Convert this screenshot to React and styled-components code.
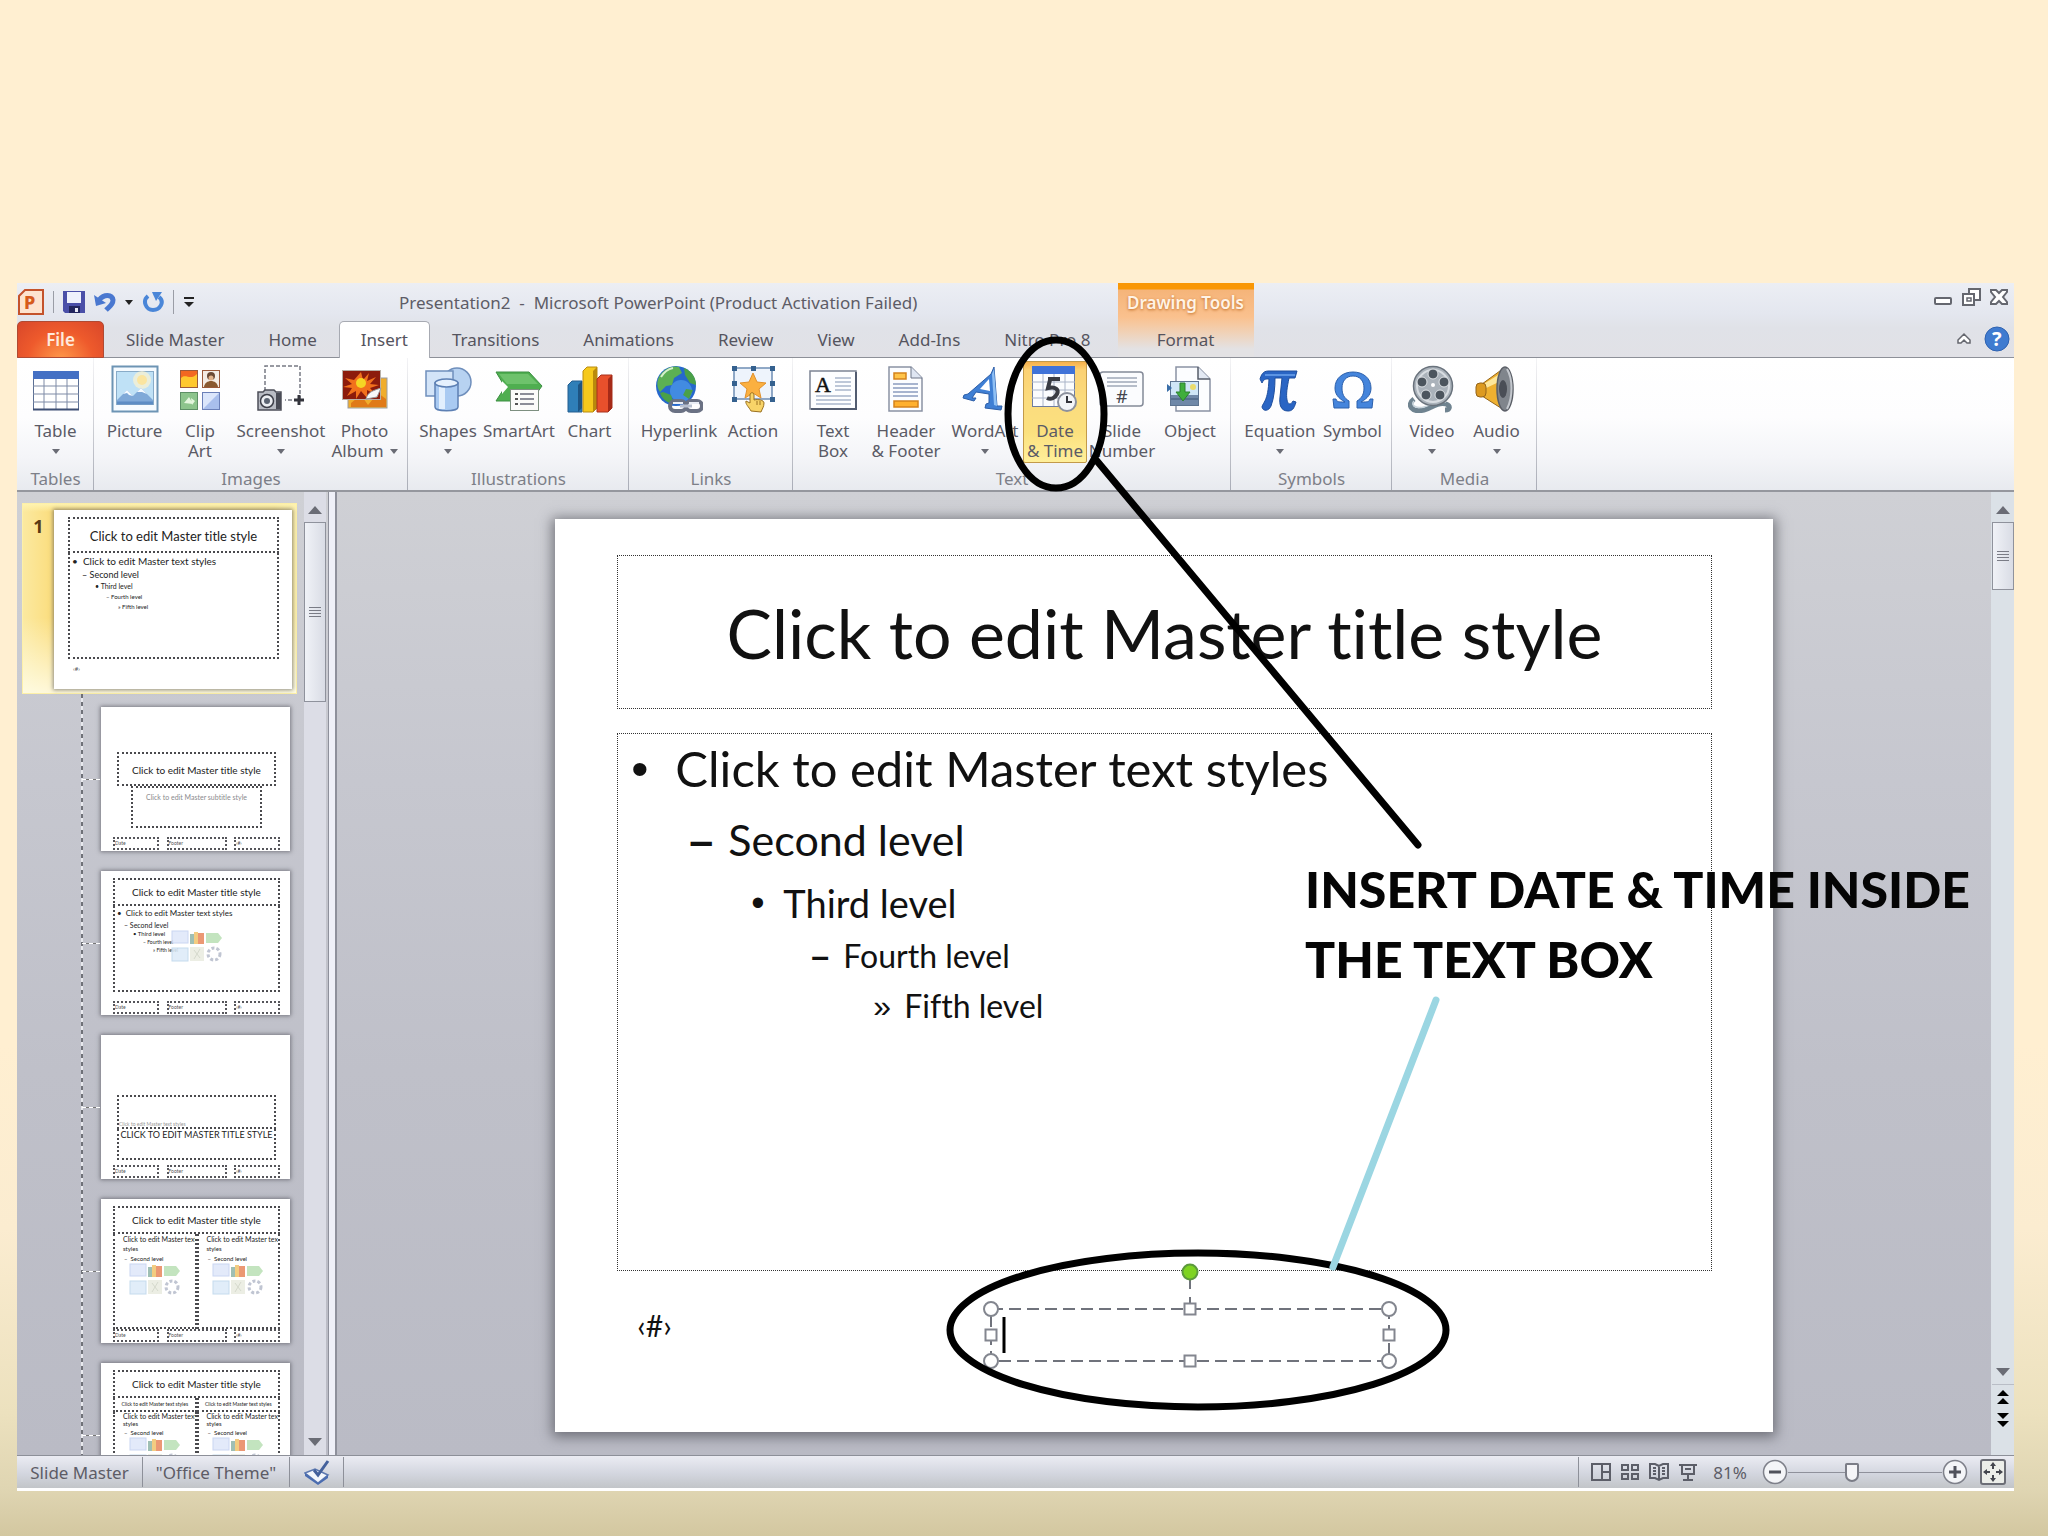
import React from "react";
import styled, { createGlobalStyle, css } from "styled-components";

const UI_FONT = '"Noto Sans", "Open Sans", sans-serif';
const SLIDE_FONT = 'Lato, "Noto Sans", sans-serif';

const GlobalStyle = createGlobalStyle`
  *, *::before, *::after { box-sizing: border-box; }
  body { margin: 0; font-family: ${UI_FONT}; color: #55575f; font-variant-ligatures: none; }
  button { font: inherit; color: inherit; background: none; border: 0; padding: 0; margin: 0; }
  h1, h2, p, ul { margin: 0; padding: 0; font-weight: 400; }
  svg { display: block; }
`;

const Page = styled.div`
  display: flex;
  height: 100vh;
  padding: 283px 34px 45px 17px;
  background: linear-gradient(#ffefd1 0%, #ffefd1 68%, #fbecd0 80%, #ece1be 92%, #dfd5b2 97%, #d3c7a0 100%);
`;

const Window = styled.main`
  position: relative;
  flex: 1;
  min-width: 0;
  display: flex;
  flex-direction: column;
`;

/* ---------- title bar and tabs ---------- */

const Header = styled.header`
  display: grid;
  grid-template-columns: auto 136px 1fr;
  grid-template-rows: 38px 37px;
  background: linear-gradient(#eceef4, #e4e7ef 40%, #e0e2e8 60%, #e1e1e6);
  font-size: 17px;
`;

const TitleRow = styled.div`
  display: flex;
  align-items: center;
  padding-left: 1px;
`;

const QuickAccess = styled.div`
  display: flex;
  align-items: center;
  gap: 9px;
  width: 381px;
`;

const Divider = styled.span`
  width: 1px;
  height: ${(p) => p.$h || 22}px;
  background: #9a9da6;
`;

const AppTitle = styled.h1`
  font-size: 17px;
  white-space: pre;
  color: #5d5c66;
`;

const Tabs = styled.nav`
  grid-row: 2;
  display: flex;
  padding-right: 5px;
  border-bottom: 1px solid #8d9098;
`;

const Tab = styled.button`
  height: 37px;
  padding: 0 21px;
  line-height: 34px;
  white-space: nowrap;
  color: #55545e;
  border: 1px solid transparent;
  border-bottom: 0;
  ${(p) =>
    p.$kind === "file" &&
    css`
      width: 87px;
      padding: 0;
      color: #ffe9dc;
      font-weight: 600;
      border: 1px solid #b04a33;
      border-radius: 5px 5px 0 0;
      background: radial-gradient(ellipse at 50% 110%, #ff9a4a, #ee5a2c 55%, #d8472a);
    `}
  ${(p) =>
    p.$kind === "active" &&
    css`
      background: #fff;
      border-color: #a7aab2;
      border-radius: 5px 5px 0 0;
    `}
`;

const ContextTab = styled.div`
  grid-column: 2;
  grid-row: 1 / 3;
  display: flex;
  flex-direction: column;
  border-bottom: 1px solid #8d9098;
  background: linear-gradient(#f99706 0, #f99706 6px, #f5b479 7px, #fac18e 34px, #f0d2b8 50px, #e3e2e4 66px);
`;

const ContextTitle = styled.span`
  height: 38px;
  line-height: 40px;
  text-align: center;
  font-weight: 600;
  font-size: 17px;
  white-space: nowrap;
  color: #fff3e6;
  text-shadow: 0 1px 3px #c06a20;
`;

const WindowControls = styled.div`
  grid-column: 3;
  display: flex;
  justify-content: flex-end;
  align-items: center;
  gap: 8px;
  padding: 0 5px 10px 0;
`;

const RibbonControls = styled.div`
  grid-column: 3;
  display: flex;
  justify-content: flex-end;
  align-items: center;
  gap: 12px;
  padding-right: 4px;
  border-bottom: 1px solid #8d9098;
`;

/* ---------- ribbon ---------- */

const Ribbon = styled.section`
  display: flex;
  height: 134px;
  background: linear-gradient(#fff 0%, #fdfdfe 45%, #f4f5f8 75%, #e8eaef 100%);
  border-bottom: 2px solid #95979e;
`;

const Group = styled.section`
  display: flex;
  flex-direction: column;
  padding: 3px 7px 0 8px;
  border-right: 1px solid;
  border-image: linear-gradient(#f4f4f6, #a9acb6) 1;
`;

const GroupButtons = styled.div`
  display: flex;
`;

const GroupTitle = styled.h2`
  margin-top: 6px;
  line-height: 20px;
  font-size: 17px;
  text-align: center;
  color: #7d7f88;
`;

const Tool = styled.button`
  display: flex;
  flex-direction: column;
  align-items: center;
  width: ${(p) => p.$w}px;
  height: 102px;
  padding-top: 3px;
  border: 1px solid transparent;
  border-radius: 2px;
  font-size: 17px;
  line-height: 20px;
  white-space: nowrap;
  color: #5b5b66;
  svg { flex: none; }
  ${(p) =>
    p.$active &&
    css`
      border-color: #c29a4a;
      background: linear-gradient(#f6b04c 0, #fbd173 8px, #fbdc7e 40%, #fbe07e 70%, #ffef9a);
    `}
`;

const ToolLabel = styled.span`
  display: flex;
  flex-direction: column;
  align-items: center;
  margin-top: 8px;
`;

const LabelLine = styled.span`
  display: flex;
  align-items: center;
  justify-content: center;
  gap: 6px;
  height: 20px;
`;

const Arrow = styled.span`
  width: 0;
  height: 0;
  border: ${(p) => p.$s || 4}px solid transparent;
  ${(p) =>
    p.$up
      ? css`border-top-width: 0; border-bottom: ${p.$h || 5}px solid ${p.$c || "#6a6c75"};`
      : css`border-bottom-width: 0; border-top: ${p.$h || 5}px solid ${p.$c || "#6a6c75"};`}
`;

/* ---------- work area ---------- */

const Work = styled.div`
  flex: 1;
  min-height: 0;
  display: flex;
  background: linear-gradient(#cfd0d5, #c6c7cf 30%, #bfc0c9 60%, #babbc5);
`;

const ThumbPane = styled.aside`
  width: 287px;
  overflow: hidden;
  padding: 11px 7px 0 5px;
`;

const MasterRow = styled.div`
  display: flex;
  height: 191px;
  padding: 6px 4px 6px 0;
  background: linear-gradient(#fff3b0 0, rgba(255, 243, 176, 0) 8px, rgba(255, 255, 240, 0) 60%, rgba(255, 255, 240, 0.8)),
    linear-gradient(90deg, #fbe9a0, #fbdc7a 12%, #f3dc82 92%, #fff2b0);
  border: 1px solid #fdf0a8;
`;

const MasterNumber = styled.span`
  width: 32px;
  text-align: center;
  font: bold 18px/32px "Noto Sans", sans-serif;
  color: #5a3a14;
`;

const Mini = styled.div`
  display: flex;
  flex-direction: column;
  flex: none;
  background: #fff;
  font-family: ${SLIDE_FONT};
  color: #222;
  box-shadow: 0 0 4px 1px rgba(70, 72, 80, 0.6);
  white-space: nowrap;
`;

const MasterMini = styled(Mini)`
  width: 238px;
  height: 179px;
  padding: 7px 13px 0 14px;
`;

const LayoutList = styled.div`
  display: flex;
  flex-direction: column;
  gap: 20px;
  margin-left: 59px;
  padding: 13px 0 0 20px;
  background: repeating-linear-gradient(#6f7178 0 4px, #e8e9ee 4px 8px) 0 0 / 2px 100% no-repeat;
`;

const LayoutMini = styled(Mini)`
  position: relative;
  width: 189px;
  height: 144px;
  padding: ${(p) => p.$top || 7}px 10px 1px 12px;
  &::before {
    content: "";
    position: absolute;
    left: -19px;
    top: 72px;
    width: 18px;
    height: 1px;
    background: repeating-linear-gradient(90deg, #fff 0 4px, #777 4px 7px);
  }
`;

const Frame = styled.div`
  flex: none;
  height: ${(p) => p.$h}px;
  margin: 0 ${(p) => p.$mx || 0}px;
  border: 2px dotted #4a4a4e;
  border-top-width: ${(p) => (p.$joined ? 0 : 2)}px;
  font-size: ${(p) => p.$fs || 10}px;
  line-height: ${(p) => p.$lh || 22}px;
  text-align: ${(p) => p.$align || "left"};
  color: ${(p) => p.$c || "#222"};
  overflow: hidden;
`;

const MiniLine = styled.p`
  padding-left: ${(p) => p.$in}px;
  font-size: ${(p) => p.$fs}px;
  line-height: ${(p) => p.$lh}px;
`;

const MiniNumber = styled.span`
  padding: 6px 0 0 5px;
  font-size: 6px;
  line-height: 8px;
  color: #555;
`;

const Columns = styled.div`
  display: grid;
  grid-template-columns: 1fr 1fr;
`;

const Art = styled.div`
  display: flex;
  justify-content: center;
  margin-top: ${(p) => p.$mt || 0}px;
  margin-left: ${(p) => p.$ml || 0}px;
  opacity: 0.85;
`;

const FooterRow = styled.div`
  display: grid;
  grid-template-columns: 46px 60px 46px;
  justify-content: space-between;
  margin-top: auto;
`;

const FooterCell = styled.span`
  height: 13px;
  border: 2px dotted #55555a;
  font-size: 5px;
  line-height: 8px;
  color: #555;
`;

const Scroll = styled.div`
  display: flex;
  flex-direction: column;
  align-items: center;
  width: ${(p) => p.$w}px;
  padding-top: 14px;
  gap: 8px;
  background: ${(p) => p.$bg};
`;

const ScrollThumb = styled.button`
  display: flex;
  flex-direction: column;
  align-items: center;
  justify-content: center;
  gap: 2px;
  width: 22px;
  height: ${(p) => p.$h}px;
  border: 1px solid #8f929c;
  background: linear-gradient(90deg, #f0f2f7, #d9dce5);
`;

const Grip = styled.span`
  width: 12px;
  height: 1px;
  background: #7a7c86;
`;

const ScrollEnd = styled.div`
  display: flex;
  flex-direction: column;
  align-items: center;
  margin-top: auto;
  padding-bottom: ${(p) => p.$pb}px;
`;

const DoubleArrows = styled.button`
  display: flex;
  flex-direction: column;
  gap: 2px;
  margin-top: ${(p) => p.$mt}px;
`;

const ScrollRule = styled.span`
  width: 22px;
  height: 1px;
  margin-top: 8px;
  background: #b9bdc6;
`;

const Splitter = styled.div`
  width: 9px;
  margin-left: 2px;
  border: solid #8e909b;
  border-width: 0 2px 0 1px;
  background: #eff0f8;
`;

const Editor = styled.section`
  flex: 1;
  min-width: 0;
  display: flex;
  justify-content: center;
  align-items: flex-start;
  padding-top: 27px;
`;

const Slide = styled.article`
  display: flex;
  flex-direction: column;
  width: 73.6%;
  aspect-ratio: 4 / 3;
  padding: 36px 61px 0 62px;
  background: #fff;
  box-shadow: 0 2px 12px 3px rgba(70, 72, 80, 0.65);
  font-family: ${SLIDE_FONT};
  color: #111;
`;

const TitleHolder = styled.div`
  height: 154px;
  border: 1px dotted #333;
  text-align: center;
  font-size: 68px;
  line-height: 154px;
  white-space: nowrap;
`;

const BodyHolder = styled.ul`
  display: flex;
  flex-direction: column;
  gap: 12px;
  height: 538px;
  margin-top: 24px;
  padding: 4px 0 0 13px;
  border: 1px dotted #333;
  list-style: none;
`;

const Level = styled.li`
  display: flex;
  padding-left: ${(p) => p.$in}px;
  font-size: ${(p) => p.$fs}px;
  line-height: ${(p) => p.$lh}px;
  white-space: nowrap;
`;

const Bullet = styled.span`
  width: ${(p) => p.$w}px;
  font-family: "Liberation Sans", sans-serif;
  font-weight: ${(p) => (p.$bold ? 700 : 400)};
`;

const SlideFooter = styled.div`
  display: flex;
  margin-top: 38px;
`;

const SlideNumber = styled.span`
  width: 374px;
  padding-left: 20px;
  font-size: 30px;
  line-height: 32px;
`;

const TextBoxWrap = styled.div`
  position: relative;
  width: 399px;
  height: 53px;
`;

const TextBoxInput = styled.input`
  width: 100%;
  height: 100%;
  padding: 0 12px;
  border: 0;
  background: transparent;
  font: 28px ${SLIDE_FONT};
  outline: none;
`;

const SelectionArt = styled.svg`
  position: absolute;
  left: -10px;
  top: -48px;
  pointer-events: none;
`;

/* ---------- status bar ---------- */

const Status = styled.footer`
  display: flex;
  align-items: center;
  height: 36px;
  border-top: 1px solid #8d9099;
  border-bottom: 3px solid #fff;
  background: linear-gradient(#ebecf3, #d3d6df 55%, #c2c5c8);
  font-size: 17px;
  color: #5d5c66;
`;

const StatusCell = styled.button`
  display: flex;
  align-items: center;
  justify-content: center;
  width: ${(p) => p.$w}px;
  height: 30px;
  border-right: 1px solid #8d9099;
  white-space: nowrap;
`;

const StatusRight = styled.div`
  display: flex;
  align-items: center;
  gap: 9px;
  margin-left: auto;
  height: 30px;
  padding: 0 8px 0 12px;
  border-left: 1px solid #8d9099;
`;

const ZoomLabel = styled.output`
  width: 46px;
  text-align: center;
`;

const ZoomBar = styled.div`
  display: flex;
  align-items: center;
  width: 206px;
  margin-right: 3px;
`;

const Range = styled.input`
  appearance: none;
  flex: 1;
  min-width: 0;
  margin: 0;
  height: 20px;
  background: linear-gradient(#8f919b, #8f919b) 0 50% / 100% 1px no-repeat;
  &::-webkit-slider-thumb {
    appearance: none;
    width: 14px;
    height: 19px;
    border: 2px solid #7b7d87;
    border-radius: 2px 2px 8px 8px;
    background: #f5f5f8;
  }
`;

/* ---------- annotations ---------- */

const Marks = styled.svg`
  position: absolute;
  inset: 0;
  width: 100%;
  height: 100%;
  pointer-events: none;
`;

const Callout = styled.p`
  position: absolute;
  left: 1288px;
  top: 571px;
  width: 700px;
  font: 900 50px/70px ${SLIDE_FONT};
  color: #050505;
  pointer-events: none;
`;

/* ---------- drawings ---------- */

const Icon = ({ s = 48, box = 48, children, ...rest }) => (
  <svg width={s} height={s} viewBox={`0 0 ${box} ${box}`} fill="none" aria-hidden="true" {...rest}>
    {children}
  </svg>
);

const icons = {
  table: (
    <Icon>
      <rect x="1.500" y="6.500" width="45" height="38" fill="#fff" stroke="#5b6f94" />
      <rect x="1" y="6" width="46" height="8" fill="#4470c4" />
      <path d="M1 21h46M1 29h46M1 37h46M12 14v30M24 14v30M35 14v30" stroke="#7f8ba6" />
      <path d="M1 44.500h46" stroke="#3e4f74" strokeWidth="2" />
    </Icon>
  ),
  picture: (
    <Icon>
      <rect x="1.500" y="1.500" width="45" height="45" fill="#f6fbff" stroke="#6d94b4" strokeWidth="2" />
      <rect x="5.500" y="6.500" width="37" height="33" fill="#bfe1f6" stroke="#88abc8" />
      <circle cx="31" cy="15" r="9" fill="#fdf3cf" opacity=".7" />
      <circle cx="31" cy="15" r="5" fill="#fbe5a0" />
      <path d="M6 35l10-10 6 6 8-8 12 12v4H6z" fill="#7fa9d8" />
      <path d="M12 29l4-4 6 6-4-1-2-2zM26 27l4-4 6 6-5-2z" fill="#f4faff" />
      <path d="M6 38h36" stroke="#5c8cc4" strokeWidth="3" />
    </Icon>
  ),
  clip: (
    <Icon>
      <rect x="4.500" y="5.500" width="17" height="17" fill="#ffc82e" stroke="#9b5a3a" />
      <path d="M5 13c5-5 9 3 16-4v-3H5z" fill="#f0501e" opacity=".8" />
      <rect x="26.500" y="5.500" width="17" height="17" fill="#f4ece4" stroke="#9b5a3a" />
      <circle cx="35" cy="11" r="4" fill="#6b4a34" />
      <path d="M28 22c1-8 13-8 14 0z" fill="#8a5a30" />
      <circle cx="35" cy="13" r="2.500" fill="#e2b48c" />
      <rect x="4.500" y="27.500" width="17" height="17" fill="#8cc48c" stroke="#5d8f66" />
      <path d="M8 38l5-6 4 7zM15 33l4 3-3 4z" fill="#e4f6de" />
      <rect x="26.500" y="27.500" width="17" height="17" fill="#a9bfec" stroke="#6b80b8" />
      <path d="M27 28h16L27 44z" fill="#dbe6fb" />
    </Icon>
  ),
  screenshot: (
    <Icon>
      <path d="M8 26V1h35v34H28" stroke="#777a84" strokeWidth="1.500" strokeDasharray="4 2" />
      <path d="M42 30v10M37 35h10" stroke="#33343c" strokeWidth="3" />
      <path d="M1 27h5l2-2h9l2 2h5v18H1z" fill="#b9bcc4" stroke="#4c4e58" strokeWidth="1.500" />
      <circle cx="10" cy="36" r="6.500" fill="#eceef2" stroke="#3c3e48" strokeWidth="1.500" />
      <circle cx="10" cy="36" r="3" fill="#5c6472" />
      <path d="M19 28h5v16h-5z" fill="#4a4c56" />
    </Icon>
  ),
  album: (
    <Icon>
      <rect x="7" y="13" width="39" height="30" fill="#f0ad2c" stroke="#9c9ca0" />
      <path d="M10 38l10-8 7 10 10-12 8 6v8H10z" fill="#e07a18" />
      <rect x="1.500" y="5.500" width="38" height="29" fill="#8c1c0c" stroke="#b8b0a8" />
      <path d="M20 7l2 8 6-7-2 8 9-4-6 7 9 1-9 3 5 6-8-4 0 8-6-7-5 8 0-8-9 5 5-8-9-1 9-3-7-6 9 2z" fill="#f2711c" />
      <circle cx="20" cy="18" r="5" fill="#f5d524" />
      <path d="M25 34c2-7 6-8 15-11l-4 9z" fill="#f8f8f8" stroke="#999" />
    </Icon>
  ),
  shapes: (
    <Icon>
      <circle cx="33" cy="17" r="14" fill="#b7d2f1" stroke="#6f8fbc" strokeWidth="1.500" />
      <rect x="2" y="6" width="27" height="25" fill="#d3e4f8" stroke="#6f8fbc" strokeWidth="1.500" />
      <path d="M11 18v24c0 5 23 5 23 0V18z" fill="#a9caf2" stroke="#5d80b4" strokeWidth="1.500" />
      <path d="M15 20v24h6V20z" fill="#e2effd" />
      <ellipse cx="22.500" cy="18" rx="11.500" ry="4" fill="#e6f1fd" stroke="#5d80b4" strokeWidth="1.500" />
    </Icon>
  ),
  smartart: (
    <Icon>
      <path d="M1 7h33l13 14-11 15H1l9-14z" fill="#4fae50" stroke="#3d8f42" />
      <path d="M4 9h29l10 10H12z" fill="#7ccb78" opacity=".7" />
      <path d="M7 16l6 6-6 7z" fill="#fff" />
      <rect x="15.500" y="24.500" width="28" height="21" fill="#fbfcfa" stroke="#7d8f80" />
      <path d="M20 29h3M20 34h3M20 39h3" stroke="#555" strokeWidth="2" />
      <path d="M25 29h14M25 34h14M25 39h14" stroke="#8b8e98" strokeWidth="2" />
    </Icon>
  ),
  chart: (
    <Icon>
      <path d="M2 20l4-4h10v31H2z" fill="#2f7fb8" stroke="#255f90" />
      <path d="M12 20l4-4v27l-4 4z" fill="#1d5482" />
      <path d="M17 6l4-4h10v41l-4 4H17z" fill="#f6c91c" stroke="#b98c10" />
      <path d="M27 6l4-4v41l-4 4z" fill="#b98a0c" />
      <path d="M31 14l4-4h11v33l-4 4H31z" fill="#e8502c" stroke="#a8301c" />
      <path d="M42 14l4-4v33l-4 4z" fill="#a52a18" />
    </Icon>
  ),
  link: (
    <Icon>
      <circle cx="21" cy="21" r="20" fill="#2668cc" />
      <circle cx="26" cy="26" r="11" fill="#55a4ee" opacity=".6" />
      <path d="M5 10C10 3 18 0 24 2l3 6-8 5-2 7-6 1-6 6c-4-6-3-12 0-17z" fill="#5cb054" />
      <path d="M29 3c8 3 12 10 12 17l-6-2-5-8zM8 27l8 3 3 9c-7 0-13-7-14-11zM31 24l7 1-4 9-6-4z" fill="#4aa048" />
      <path d="M6 12c3-5 7-8 12-9" stroke="#d6f0cc" strokeWidth="2" />
      <rect x="15" y="36" width="16" height="10" rx="5" stroke="#6a7184" strokeWidth="4" />
      <rect x="31" y="36" width="16" height="10" rx="5" stroke="#6a7184" strokeWidth="4" />
      <path d="M18 38h10M34 38h10" stroke="#e9edf5" strokeWidth="2" />
      <path d="M25 41h12" stroke="#b8c0d0" strokeWidth="3" />
    </Icon>
  ),
  action: (
    <Icon>
      <rect x="5" y="3" width="38" height="31" fill="#eef4fc" stroke="#6e8db4" strokeWidth="1.500" />
      <path d="M24 8l4 9 9 1-7 6 2 9-8-5-8 5 2-9-7-6 9-1z" fill="#fbb040" stroke="#e0902c" />
      <g fill="#35618f">
        <rect x="3" y="1" width="5" height="5" /><rect x="22" y="1" width="5" height="5" /><rect x="41" y="1" width="5" height="5" />
        <rect x="3" y="16" width="5" height="5" /><rect x="41" y="16" width="5" height="5" />
        <rect x="3" y="32" width="5" height="5" /><rect x="41" y="32" width="5" height="5" />
      </g>
      <path d="M22 46c-2-4-6-7-5-10l4 2V30c0-3 4-3 4 0v5c4-1 10 0 10 3 0 4-2 6-3 9z" fill="#f8d468" stroke="#9a7020" />
      <path d="M28 36v4M31 36v4" stroke="#9a7020" />
    </Icon>
  ),
  textbox: (
    <Icon>
      <rect x="1" y="6" width="46" height="38" fill="#fdfeff" stroke="#7c8494" strokeWidth="1.500" />
      <path d="M2 44h45V7" stroke="#525c70" strokeWidth="2" />
      <text x="6" y="27" fontFamily="Liberation Serif, serif" fontWeight="400" fontSize="22" fill="#111" stroke="#111" strokeWidth=".5">A</text>
      <path d="M26 13h16M26 17h16M26 21h16M26 25h16M7 31h35M7 35h35M7 39h35" stroke="#a9b6cc" strokeWidth="1.500" />
    </Icon>
  ),
  header: (
    <Icon>
      <path d="M7 2h22l11 11v33H7z" fill="#fcfdff" stroke="#8a92a4" strokeWidth="1.500" />
      <path d="M29 2v11h11" fill="#dfe6f2" stroke="#6c7486" />
      <rect x="12" y="8" width="12" height="6" fill="#ffc44a" stroke="#d4821c" strokeWidth="1.500" />
      <rect x="12" y="36" width="24" height="6" fill="#ffb02e" stroke="#d4821c" strokeWidth="1.500" />
      <path d="M11 19h25M11 23h25M11 27h25M11 31h25" stroke="#8b9cc0" strokeWidth="1.500" />
    </Icon>
  ),
  wordart: (
    <Icon>
      <path d="M33 2l3 39h5l-1 4-16-2 1-4 3-1v-9l-13-2-4 6h4l-2 3-11-3 1-3 4-1L30 9z" fill="#3f7fd4" stroke="#2c5ea8" />
      <path d="M28 14l1 12-10-2z" fill="#fff" />
      <path d="M33 4l3 37-3-1-2-31z" fill="#8fc0f4" />
    </Icon>
  ),
  date: (
    <Icon>
      <rect x="1.500" y="1.500" width="42" height="40" fill="#fbfcfe" stroke="#6d7ca0" />
      <rect x="1" y="1" width="43" height="8" fill="#3f72d8" />
      <path d="M1 17h43M1 25h43M1 33h43M12 9v32M23 9v32M34 9v32" stroke="#aab4c8" />
      <path d="M17 14h12M19 15l-2 8c8-2 11 2 9 6s-6 6-10 4" stroke="#3a3c44" strokeWidth="4" />
      <circle cx="36" cy="37" r="9" fill="#f3f5f9" stroke="#8c919e" strokeWidth="2" />
      <path d="M36 31v6h5" stroke="#33343c" strokeWidth="2" />
    </Icon>
  ),
  number: (
    <Icon>
      <rect x="2" y="7" width="43" height="34" rx="3" fill="#fbfcfe" stroke="#848a98" strokeWidth="1.500" />
      <path d="M9 13h30M9 17h30M9 21h30" stroke="#a0a8b8" strokeWidth="1.500" />
      <text x="18" y="38" fontFamily="Noto Sans, sans-serif" fontSize="18" fill="#44464e">#</text>
    </Icon>
  ),
  object: (
    <Icon>
      <path d="M10 2h22l12 12v32H10z" fill="#fcfdff" stroke="#8a92a4" strokeWidth="1.500" />
      <path d="M32 2v12h12" fill="#e3e9f3" stroke="#565c6a" strokeWidth="1.500" />
      <rect x="4.500" y="16.500" width="28" height="24" fill="#cfe6f7" stroke="#5d7490" />
      <path d="M5 30h27v10H5z" fill="#6f88a8" />
      <path d="M5 34h27" stroke="#3f5676" />
      <circle cx="27" cy="22" r="3" fill="#eadb6c" />
      <path d="M14 18h5v9h5l-7 9-7-9h4z" fill="#3fae3c" stroke="#2c8030" />
      <path d="M1 19l5 4-5 4z" fill="#3a6ea8" />
    </Icon>
  ),
  equation: (
    <Icon>
      <path d="M4 14c2-7 5-8 9-8h28l-2 7h-6c-2 10-3 16-2 22 1 5 4 5 6 1l3 1c-2 7-4 9-8 9-7 0-9-6-8-14l2-19h-7c0 10-1 20-4 28-2 5-8 6-9 1 1-5 6-5 7-28-4 0-5 0-7 4z" fill="#2a65c4" stroke="#1f4f9e" />
      <path d="M9 10h30" stroke="#6ea4ee" strokeWidth="1.500" />
    </Icon>
  ),
  symbol: (
    <Icon>
      <path d="M5 43l-1-9h3c1 3 2 3 9 3C9 33 6 29 6 23 6 13 14 7 24 7s18 6 18 16c0 6-3 10-10 14 7 0 8 0 9-3h3l-1 9H28v-7c5-3 7-7 7-13 0-7-4-12-11-12s-11 5-11 12c0 6 2 10 7 13v7z" fill="#4585dc" stroke="#2c60ac" />
    </Icon>
  ),
  video: (
    <Icon>
      <path d="M6 34c-8 6-2 14 10 11 8-2 14-9 22-6 5 2 4 6-1 6" stroke="#6f8390" strokeWidth="5" />
      <path d="M6 36c-4 4 2 8 10 6 8-2 14-8 22-5" stroke="#c8d4dc" strokeWidth="1.500" />
      <circle cx="25" cy="21" r="19.500" fill="#aab2ba" stroke="#69727c" strokeWidth="1.500" />
      <circle cx="25" cy="21" r="16" stroke="#d8dde2" strokeWidth="2" />
      <g fill="#4c555e" stroke="#dfe3e7">
        <circle cx="25" cy="9" r="5" /><circle cx="14" cy="17" r="5" /><circle cx="36" cy="17" r="5" />
        <circle cx="18" cy="30" r="5" /><circle cx="32" cy="30" r="5" />
      </g>
      <circle cx="25" cy="20" r="2" fill="#fff" />
    </Icon>
  ),
  audio: (
    <Icon>
      <path d="M9 19L31 3c5 12 5 28 0 42L9 31z" fill="#eeb030" stroke="#94641a" />
      <path d="M9 20L30 7v8L9 25z" fill="#fde69a" />
      <rect x="3" y="18" width="10" height="14" rx="4" fill="#dd9a20" stroke="#94641a" />
      <ellipse cx="32" cy="24" rx="8" ry="22" fill="#80858c" stroke="#5a5e66" strokeWidth="1.500" />
      <path d="M34 4c6 10 6 28 0 40" stroke="#c4c8ce" strokeWidth="2" />
      <ellipse cx="30" cy="24" rx="4" ry="9" fill="#4a4e56" />
    </Icon>
  ),
};

const groups = [
  { name: "Tables", tools: [["table", 61, "Table", "v"]] },
  { name: "Images", tools: [["picture", 65, "Picture"], ["clip", 66, "Clip", "Art"], ["screenshot", 96, "Screenshot", "v"], ["album", 71, "Photo", "Album v"]] },
  { name: "Illustrations", tools: [["shapes", 64, "Shapes", "v"], ["smartart", 78, "SmartArt"], ["chart", 63, "Chart"]] },
  { name: "Links", tools: [["link", 84, "Hyperlink"], ["action", 64, "Action"]] },
  { name: "Text", tools: [["textbox", 64, "Text", "Box"], ["header", 82, "Header", "& Footer"], ["wordart", 76, "WordArt", "v"], ["date", 64, "Date", "& Time"], ["number", 70, "Slide", "Number"], ["object", 66, "Object"]] },
  { name: "Symbols", tools: [["equation", 82, "Equation", "v"], ["symbol", 63, "Symbol"]] },
  { name: "Media", tools: [["video", 64, "Video", "v"], ["audio", 65, "Audio", "v"]] },
];

const RibbonTool = ({ tool: [icon, width, first, second = ""] }) => {
  const drop = second.endsWith("v");
  const text = drop ? second.slice(0, -1).trim() : second;
  return (
    <Tool $w={width} $active={icon === "date"} type="button">
      {icons[icon]}
      <ToolLabel>
        <LabelLine>{first}</LabelLine>
        <LabelLine>
          {text}
          {drop && <Arrow />}
        </LabelLine>
      </ToolLabel>
    </Tool>
  );
};

const ContentArt = () => (
  <svg width="52" height="32" viewBox="0 0 52 32" aria-hidden="true">
    <rect x="1" y="1" width="16" height="12" fill="#dfe7fa" stroke="#c2cff0" />
    <rect x="19" y="4" width="4" height="10" fill="#8fb4a8" />
    <rect x="23" y="2" width="4" height="12" fill="#f2c46c" />
    <rect x="27" y="3" width="6" height="11" fill="#e8875c" />
    <path d="M35 3h12l4 5-4 5H35z" fill="#b9e0b4" />
    <rect x="1" y="18" width="16" height="13" fill="#dcebf8" stroke="#bcd5ec" />
    <rect x="19" y="17" width="14" height="14" fill="#e9ece0" />
    <path d="M23 20l6 8M29 19l-6 10" stroke="#cfd3c4" />
    <circle cx="43" cy="24" r="6" fill="none" stroke="#b6bccb" strokeWidth="3" strokeDasharray="3 2" />
  </svg>
);

const MiniFooter = () => (
  <FooterRow>
    <FooterCell>Date</FooterCell>
    <FooterCell>Footer</FooterCell>
    <FooterCell>‹#›</FooterCell>
  </FooterRow>
);

const MiniColumn = ({ h, tight }) => (
  <Frame $h={h} $joined>
    <MiniLine $in={8} $fs={7} $lh={tight ? 8 : 10}>Click to edit Master text</MiniLine>
    <MiniLine $in={8} $fs={6} $lh={tight ? 8 : 10}>styles</MiniLine>
    <MiniLine $in={9} $fs={6} $lh={9}>–&nbsp; Second level</MiniLine>
    <Art><ContentArt /></Art>
  </Frame>
);

const ViewIcon = ({ d }) => (
  <Icon s={20} box={20}>
    <path d={d} stroke="#5c5e68" strokeWidth="2" />
  </Icon>
);

const viewButtons = [
  ["Normal", "M1 2h18v16H1zM11 2v16M11 10h8"],
  ["Slide Sorter", "M2 3h6v5H2zM12 3h6v5h-6zM2 12h6v5H2zM12 12h6v5h-6z"],
  ["Reading View", "M10 4v15M10 4L6 2H1v14h5l4 2 4-2h5V2h-5zM4 6h3M4 9h3M4 12h3M13 6h3M13 9h3M13 12h3"],
  ["Slide Show", "M1 3h18M4 3v9h12V3M10 12v6M5 18h10M7 7h6"],
];

const tabs = ["Slide Master", "Home", "Insert", "Transitions", "Animations", "Review", "View", "Add-Ins", "Nitro Pro 8"];

export default function App() {
  return (
    <Page>
      <GlobalStyle />
      <Window>
        <Header>
          <TitleRow>
            <QuickAccess>
              <Icon s={26} box={26}>
                <path d="M7 1h18v24H1V7z" fill="#fde3cf" stroke="#c4532c" strokeWidth="2" />
                <text x="6" y="20" fontFamily="Noto Sans, sans-serif" fontWeight="800" fontSize="18" fill="#d65a1c">P</text>
              </Icon>
              <Divider />
              <button type="button" aria-label="Save">
                <Icon s={22} box={22}>
                  <path d="M0 0h22v22H2l-2-2z" fill="#4a4fa8" />
                  <path d="M4 1h14v11H4z" fill="#eef1fc" />
                  <path d="M6 15h11v7H6z" fill="#23265e" />
                  <path d="M12 17h3v4h-3z" fill="#e8eaf6" />
                </Icon>
              </button>
              <button type="button" aria-label="Undo">
                <Icon s={22} box={22}>
                  <path d="M5 9c5-6 13-6 14 0 0 5-4 7-7 10" stroke="#4a78d0" strokeWidth="5" />
                  <path d="M0 4l2 11 10-3z" fill="#4a78d0" />
                </Icon>
              </button>
              <Arrow $c="#222" />
              <button type="button" aria-label="Repeat">
                <Icon s={22} box={22}>
                  <path d="M6 5c-6 5-2 14 5 14s12-8 6-13" stroke="#4a86d8" strokeWidth="4" />
                  <path d="M10 1h10l-6 9z" fill="#4a86d8" />
                </Icon>
              </button>
              <Divider $h={24} />
              <button type="button" aria-label="Customize toolbar">
                <Icon s={12} box={12}>
                  <path d="M1 2h10" stroke="#222" strokeWidth="2" />
                  <path d="M1 6h10l-5 5z" fill="#222" />
                </Icon>
              </button>
            </QuickAccess>
            <AppTitle>{"Presentation2  -  Microsoft PowerPoint (Product Activation Failed)"}</AppTitle>
          </TitleRow>
          <ContextTab>
            <ContextTitle>Drawing Tools</ContextTitle>
            <Tab type="button">Format</Tab>
          </ContextTab>
          <WindowControls>
            <button type="button" aria-label="Minimize">
              <Icon s={20} box={20}><rect x="2" y="11" width="16" height="6" rx="1" fill="#fff" stroke="#65676f" strokeWidth="2" /></Icon>
            </button>
            <button type="button" aria-label="Restore">
              <Icon s={20} box={20}>
                <path d="M8 2h11v11H8z" fill="#fff" stroke="#65676f" strokeWidth="2" />
                <path d="M2 7h11v11H2z" fill="#fff" stroke="#65676f" strokeWidth="2" />
                <rect x="6" y="11" width="4" height="3" stroke="#65676f" strokeWidth="1.500" />
              </Icon>
            </button>
            <button type="button" aria-label="Close">
              <Icon s={20} box={20}><path d="M2 3h5l3 3 3-3h5v2l-4 5 4 5v2h-5l-3-3-3 3H2v-2l4-5-4-5z" fill="#fff" stroke="#65676f" strokeWidth="2" /></Icon>
            </button>
          </WindowControls>
          <Tabs>
            <Tab type="button" $kind="file">File</Tab>
            {tabs.map((t) => (
              <Tab key={t} type="button" $kind={t === "Insert" ? "active" : undefined}>{t}</Tab>
            ))}
          </Tabs>
          <RibbonControls>
            <button type="button" aria-label="Minimize the ribbon">
              <Icon s={16} box={16}><path d="M2 9l6-6 6 6v3h-3L8 9l-3 3H2z" fill="#fff" stroke="#65676f" strokeWidth="1.500" /></Icon>
            </button>
            <button type="button" aria-label="Help">
              <Icon s={26} box={26}>
                <circle cx="13" cy="13" r="12" fill="#3f7bd0" stroke="#2f62b0" />
                <text x="8" y="20" fontFamily="Noto Sans, sans-serif" fontWeight="700" fontSize="20" fill="#fff">?</text>
              </Icon>
            </button>
          </RibbonControls>
        </Header>

        <Ribbon>
          {groups.map((g) => (
            <Group key={g.name}>
              <GroupButtons>
                {g.tools.map((t) => <RibbonTool key={t[0]} tool={t} />)}
              </GroupButtons>
              <GroupTitle>{g.name}</GroupTitle>
            </Group>
          ))}
        </Ribbon>

        <Work>
          <ThumbPane>
            <MasterRow>
              <MasterNumber>1</MasterNumber>
              <MasterMini>
                <Frame $h={36} $fs={13} $lh={34} $align="center">Click to edit Master title style</Frame>
                <Frame $h={106} $joined>
                  <MiniLine $in={2} $fs={10} $lh={16}>•&nbsp; Click to edit Master text styles</MiniLine>
                  <MiniLine $in={12} $fs={9} $lh={12}>– Second level</MiniLine>
                  <MiniLine $in={25} $fs={7} $lh={11}>• Third level</MiniLine>
                  <MiniLine $in={36} $fs={6} $lh={10}>– Fourth level</MiniLine>
                  <MiniLine $in={48} $fs={6} $lh={10}>» Fifth level</MiniLine>
                </Frame>
                <MiniNumber>‹#›</MiniNumber>
              </MasterMini>
            </MasterRow>
            <LayoutList>
              <LayoutMini $top={45}>
                <Frame $h={34} $mx={4} $lh={32} $align="center">Click to edit Master title style</Frame>
                <Frame $h={42} $mx={18} $fs={7} $lh={18} $align="center" $c="#8a8a8e">Click to edit Master subtitle style</Frame>
                <MiniFooter />
              </LayoutMini>
              <LayoutMini>
                <Frame $h={28} $lh={24} $align="center">Click to edit Master title style</Frame>
                <Frame $h={86} $joined>
                  <MiniLine $in={2} $fs={8} $lh={14}>•&nbsp; Click to edit Master text styles</MiniLine>
                  <MiniLine $in={9} $fs={7} $lh={10}>– Second level</MiniLine>
                  <MiniLine $in={18} $fs={6} $lh={8}>• Third level</MiniLine>
                  <MiniLine $in={28} $fs={5} $lh={8}>– Fourth level</MiniLine>
                  <MiniLine $in={38} $fs={5} $lh={8}>» Fifth level</MiniLine>
                  <Art $mt={-24}><ContentArt /></Art>
                </Frame>
                <MiniFooter />
              </LayoutMini>
              <LayoutMini $top={60}>
                <Frame $h={34} $mx={4} $fs={5} $lh={54} $c="#999">Click to edit Master text styles</Frame>
                <Frame $h={31} $mx={4} $joined $fs={9} $lh={12} $align="center">CLICK TO EDIT MASTER TITLE STYLE</Frame>
                <MiniFooter />
              </LayoutMini>
              <LayoutMini>
                <Frame $h={28} $lh={24} $align="center">Click to edit Master title style</Frame>
                <Columns>
                  <MiniColumn h={95} />
                  <MiniColumn h={95} />
                </Columns>
                <MiniFooter />
              </LayoutMini>
              <LayoutMini>
                <Frame $h={28} $lh={24} $align="center">Click to edit Master title style</Frame>
                <Columns>
                  <Frame $h={14} $joined $fs={5} $lh={12} $align="center">Click to edit Master text styles</Frame>
                  <Frame $h={14} $joined $fs={5} $lh={12} $align="center">Click to edit Master text styles</Frame>
                  <MiniColumn h={81} tight />
                  <MiniColumn h={81} tight />
                </Columns>
              </LayoutMini>
            </LayoutList>
          </ThumbPane>
          <Scroll $w={22} $bg="#dcdde6">
            <Arrow $up $s={7} $h={8} />
            <ScrollThumb $h={180} type="button" aria-label="Scroll slides">
              <Grip /><Grip /><Grip /><Grip />
            </ScrollThumb>
            <ScrollEnd $pb={9}><Arrow $s={7} $h={8} /></ScrollEnd>
          </Scroll>
          <Splitter />

          <Editor>
            <Slide>
              <TitleHolder>Click to edit Master title style</TitleHolder>
              <BodyHolder>
                <Level $in={0} $fs={49} $lh={60}><Bullet $w={44}>•</Bullet>Click to edit Master text styles</Level>
                <Level $in={58} $fs={43} $lh={60}><Bullet $w={39} $bold>–</Bullet>Second level</Level>
                <Level $in={120} $fs={38} $lh={42}><Bullet $w={32}>•</Bullet>Third level</Level>
                <Level $in={180} $fs={32} $lh={40}><Bullet $w={32} $bold>–</Bullet>Fourth level</Level>
                <Level $in={242} $fs={32} $lh={36}><Bullet $w={31}>»</Bullet>Fifth level</Level>
              </BodyHolder>
              <SlideFooter>
                <SlideNumber>‹#›</SlideNumber>
                <TextBoxWrap>
                  <TextBoxInput type="text" aria-label="Slide text box" />
                  <SelectionArt width="420" height="110" viewBox="0 0 420 110" fill="none">
                    <path d="M10 48h398v52H10z" stroke="#70737c" strokeWidth="2" strokeDasharray="12 6" />
                    <path d="M209 18v30" stroke="#70737c" strokeDasharray="10 8" strokeWidth="2" />
                    <circle cx="209" cy="11" r="7.500" fill="#7ed321" stroke="#5c9a3c" strokeWidth="2" />
                    <g fill="#fff" stroke="#83868f" strokeWidth="2">
                      <circle cx="10" cy="48" r="7" /><circle cx="408" cy="48" r="7" />
                      <circle cx="10" cy="100" r="7" /><circle cx="408" cy="100" r="7" />
                      <rect x="203.500" y="42.500" width="11" height="11" /><rect x="203.500" y="94.500" width="11" height="11" />
                      <rect x="4.500" y="68.500" width="11" height="11" /><rect x="402.500" y="68.500" width="11" height="11" />
                    </g>
                    <path d="M23 56v36" stroke="#000" strokeWidth="3" />
                  </SelectionArt>
                </TextBoxWrap>
              </SlideFooter>
            </Slide>
          </Editor>

          <Scroll $w={23} $bg="#dbe1e7">
            <Arrow $up $s={7} $h={8} />
            <ScrollThumb $h={68} type="button" aria-label="Scroll editor">
              <Grip /><Grip /><Grip /><Grip />
            </ScrollThumb>
            <ScrollEnd $pb={28}>
              <Arrow $s={7} $h={8} />
              <ScrollRule />
              <DoubleArrows $mt={5} type="button" aria-label="Previous slide">
                <Arrow $up $s={6} $h={6} $c="#000" /><Arrow $up $s={6} $h={6} $c="#000" />
              </DoubleArrows>
              <DoubleArrows $mt={9} type="button" aria-label="Next slide">
                <Arrow $s={6} $h={6} $c="#000" /><Arrow $s={6} $h={6} $c="#000" />
              </DoubleArrows>
            </ScrollEnd>
          </Scroll>
        </Work>

        <Status>
          <StatusCell $w={126} type="button">Slide Master</StatusCell>
          <StatusCell $w={147} type="button">"Office Theme"</StatusCell>
          <StatusCell $w={54} type="button" aria-label="Spelling">
            <Icon s={26} box={26}>
              <path d="M1 14l10-4 13 6-10 8z" fill="#f4f7fc" stroke="#5c78b0" strokeWidth="1.500" />
              <path d="M1 14v3l13 9 10-7v-3l-10 8z" fill="#4a6cb0" />
              <path d="M10 11l4 5L24 2" stroke="#44619c" strokeWidth="3" />
            </Icon>
          </StatusCell>
          <StatusRight>
            {viewButtons.map(([name, d]) => (
              <button key={name} type="button" aria-label={name}><ViewIcon d={d} /></button>
            ))}
            <ZoomLabel htmlFor="zoom">81%</ZoomLabel>
            <ZoomBar>
              <button type="button" aria-label="Zoom out">
                <Icon s={26} box={26}><circle cx="13" cy="13" r="11.500" fill="#f4f5f8" stroke="#7e808a" strokeWidth="1.500" /><path d="M7 13h12" stroke="#50525c" strokeWidth="3" /></Icon>
              </button>
              <Range id="zoom" type="range" min="0" max="100" defaultValue="41" aria-label="Zoom" />
              <button type="button" aria-label="Zoom in">
                <Icon s={26} box={26}><circle cx="13" cy="13" r="11.500" fill="#f4f5f8" stroke="#7e808a" strokeWidth="1.500" /><path d="M7 13h12M13 7v12" stroke="#50525c" strokeWidth="3" /></Icon>
              </button>
            </ZoomBar>
            <button type="button" aria-label="Fit slide to window">
              <Icon s={26} box={26}>
                <rect x="1" y="1" width="24" height="24" rx="2" fill="#eceee9" stroke="#6c6e76" strokeWidth="2" />
                <path d="M13 6v4M13 16v4M6 13h4M16 13h4" stroke="#44464e" strokeWidth="2" />
                <path d="M10 7h6l-3-4zM10 19h6l-3 4zM7 10v6l-4-3zM19 10v6l4-3z" fill="#44464e" />
              </Icon>
            </button>
          </StatusRight>
        </Status>

        <Marks fill="none" strokeLinecap="round" aria-hidden="true">
          <ellipse cx="1039" cy="131" rx="48" ry="74" stroke="#000" strokeWidth="7" />
          <path d="M1080 178L1401 562" stroke="#000" strokeWidth="7" />
          <ellipse cx="1181" cy="1047" rx="248" ry="77" stroke="#000" strokeWidth="7" />
          <path d="M1419 717L1316 984" stroke="#9bd6e2" strokeWidth="7" />
        </Marks>
        <Callout>INSERT DATE &amp; TIME INSIDE<br />THE TEXT BOX</Callout>
      </Window>
    </Page>
  );
}
